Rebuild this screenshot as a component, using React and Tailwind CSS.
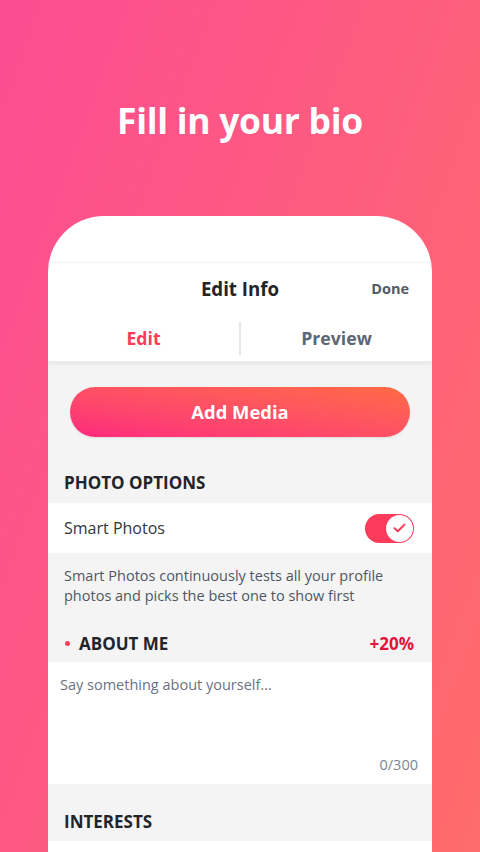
import React from 'react';

const FONT = { fontFamily: "'Open Sans', 'Liberation Sans', sans-serif" };

function Toggle() {
  return (
    <div className="w-[49px] h-[29px] rounded-full bg-[#fd3b5b] flex items-center justify-end pr-[1px]">
      <div className="w-[27px] h-[27px] rounded-full bg-white flex items-center justify-center">
        <svg width="13" height="10" viewBox="0 0 13 10" fill="none">
          <path d="M1.5 5.2 L4.8 8.3 L11.5 1.6" stroke="#fd3b5b" strokeWidth="2" strokeLinecap="round" strokeLinejoin="round" />
        </svg>
      </div>
    </div>
  );
}

export default function App() {
  return (
    <div className="w-[480px] h-[852px] overflow-hidden bg-linear-[110deg] from-[#fc4c93] to-[#ff6c6b] flex flex-col items-center" style={FONT}>
      <h1 className="mt-[100px] text-white text-[35.5px] font-bold leading-[40px] tracking-[-0.3px]">Fill in your bio</h1>

      <div className="mt-[76px] w-[384px] flex-1 bg-white rounded-t-[56px] overflow-hidden flex flex-col">
        <div className="h-[47px] shrink-0 border-b border-[#f2f2f2]" />
        <div className="h-[52px] shrink-0 relative flex items-center justify-center">
          <p className="text-[18.7px] font-bold text-[#21252b]">Edit Info</p>
          <p className="absolute right-[23px] text-[14.5px] font-bold text-[#525a66]">Done</p>
        </div>
        <div className="h-[47px] shrink-0 flex items-center shadow-[0_2px_3px_rgba(0,0,0,0.06)] relative z-10 border-b border-[#ececec]">
          <div className="flex-1 text-center text-[17.7px] font-bold text-[#fd3b5b]">Edit</div>
          <div className="w-[2px] h-[33px] bg-[#e6e6e6]" />
          <div className="flex-1 text-center text-[17.7px] font-bold text-[#5e6673]">Preview</div>
        </div>

        <div className="flex-1 bg-[#f4f4f4] flex flex-col">
          <div className="px-[22px] pt-[25px]">
            <div className="h-[50px] rounded-full bg-linear-to-tr from-[#fd267d] to-[#ff6a43] flex items-center justify-center shadow-[0_1px_2px_rgba(0,0,0,0.1)]">
              <span className="text-white text-[18.4px] font-bold">Add Media</span>
            </div>
          </div>

          <div className="h-[66px] px-[16px] flex items-end pb-[10px]">
            <p className="text-[17px] font-bold text-[#21252b] leading-[20px]">PHOTO OPTIONS</p>
          </div>
          <div className="h-[50px] bg-white flex items-center justify-between px-[16px] pr-[18px]">
            <span className="text-[16px] text-[#31363d]">Smart Photos</span>
            <Toggle />
          </div>
          <p className="px-[16px] pt-[13px] h-[72px] text-[14.5px] leading-[20px] text-[#4f5764]">
            Smart Photos continuously tests all your profile photos and picks the best one to show first
          </p>

          <div className="h-[37px] flex items-center justify-between px-[16px] pr-[18px]">
            <div className="flex items-center">
              <span className="w-[5px] h-[5px] rounded-full bg-[#fd3b5b] ml-[1px] mr-[9px]" />
              <span className="text-[17px] font-bold text-[#21252b]">ABOUT ME</span>
            </div>
            <span className="text-[17px] font-bold text-[#e0163e]">+20%</span>
          </div>
          <div className="h-[122px] bg-white flex flex-col justify-between px-[12px] pt-[12px] pb-[8px]">
            <span className="text-[14.5px] text-[#6b7280]">Say something about yourself...</span>
            <span className="self-end text-[14.5px] text-[#7c8490] pr-[2px]">0/300</span>
          </div>

          <div className="h-[57px] px-[16px] flex items-end pb-[9px]">
            <p className="text-[17px] font-bold text-[#21252b] leading-[20px]">INTERESTS</p>
          </div>
          <div className="flex-1 bg-white" />
        </div>
      </div>
    </div>
  );
}
